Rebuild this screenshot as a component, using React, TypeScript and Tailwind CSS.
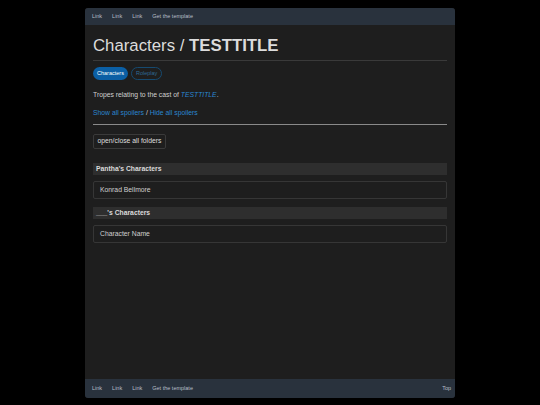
export default function App() {
  const links = ['Link', 'Link', 'Link', 'Get the template']

  return (
    <div
      className="min-h-[405px] w-[540px] bg-black pt-2 pb-[7px] flex justify-center"
      style={{ fontFamily: '"Liberation Sans", Arial, sans-serif' }}
    >
      <div className="w-[370px] h-[390px] flex flex-col rounded-[3px] overflow-hidden bg-[#1e1e1e]">
        <nav className="h-[17px] bg-[#29323d] flex items-center gap-[10px] px-[7px] text-[5.5px] text-[#b8bec6]">
          {links.map((l, i) => (
            <span key={i}>{l}</span>
          ))}
        </nav>

        <main className="flex-1 px-2 pt-[10px]">
          <h1 className="text-[16.8px] leading-[21px] text-[#dcdcdc] pb-[4px] border-b border-[#3a3a3a]">
            Characters / <b className="font-bold">TESTTITLE</b>
          </h1>

          <div className="flex gap-[3px] mt-[6px]">
            <span className="h-[13px] px-[4px] rounded-full bg-[#0b5fa5] text-white text-[5.5px] flex items-center">
              Characters
            </span>
            <span className="h-[13px] px-[4px] rounded-full border border-[#164a70] text-[#2e6a96] text-[5.5px] flex items-center">
              Roleplay
            </span>
          </div>

          <p className="text-[6.8px] leading-[10px] text-[#cfcfcf] mt-[10px]">
            Tropes relating to the cast of{' '}
            <i className="text-[#2a86cf]">TESTTITLE</i>.
          </p>

          <p className="text-[6.8px] leading-[10px] text-[#cfcfcf] mt-[8px]">
            <span className="text-[#2a86cf]">Show all spoilers</span> /{' '}
            <span className="text-[#2a86cf]">Hide all spoilers</span>
          </p>

          <div className="mt-[6px] border-t border-[#8a8a8a]" />

          <div className="mt-[9px] inline-flex h-[15px] items-center px-[3.5px] rounded-[2px] border border-[#3a3a3a] text-[6.8px] text-[#dedede]">
            open/close all folders
          </div>

          <div className="mt-[13px] flex flex-col">
            <div className="h-[12px] bg-[#2e2e2e] flex items-center px-[3px] text-[6.8px] font-bold text-[#dadada]">
              Pantha's Characters
            </div>
            <div className="mt-[6px] h-[18px] flex items-center px-[6px] rounded-[2px] border border-[#363636] text-[6.8px] text-[#cfcfcf]">
              Konrad Bellmore
            </div>
            <div className="mt-[8px] h-[12px] bg-[#2e2e2e] flex items-center px-[3px] text-[6.8px] font-bold text-[#dadada]">
              ___'s Characters
            </div>
            <div className="mt-[6px] h-[18px] flex items-center px-[6px] rounded-[2px] border border-[#363636] text-[6.8px] text-[#cfcfcf]">
              Character Name
            </div>
          </div>
        </main>

        <footer className="h-[19px] bg-[#29323d] flex items-center gap-[10px] pl-[7px] pr-[4px] text-[5.5px] text-[#b8bec6]">
          {links.map((l, i) => (
            <span key={i}>{l}</span>
          ))}
          <span className="ml-auto">Top</span>
        </footer>
      </div>
    </div>
  )
}
